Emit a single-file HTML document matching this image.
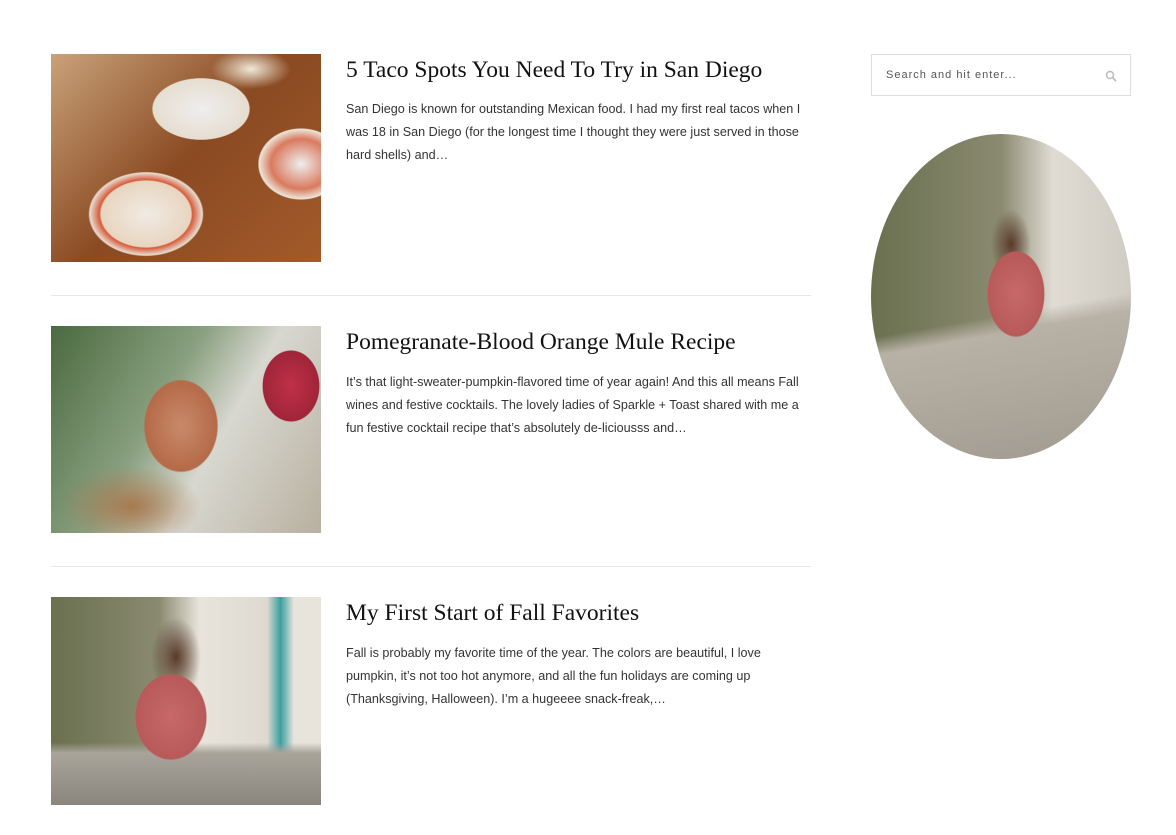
<!DOCTYPE html>
<html><head><meta charset="utf-8"><style>
*{margin:0;padding:0;box-sizing:border-box}
body{width:1176px;height:835px;background:#fff;position:relative;overflow:hidden;font-family:"Liberation Sans",sans-serif}
.img{position:absolute;left:51px;width:270px;overflow:hidden}
h2{position:absolute;left:346px;font-family:"Liberation Serif",serif;font-weight:normal;font-size:23.5px;color:#111;white-space:nowrap;letter-spacing:0px}
p{position:absolute;left:346px;width:462px;font-size:12.6px;line-height:23px;color:#333}
.hr{position:absolute;left:51px;width:760px;height:1px;background:#e8e8e8}
</style></head><body>
<div class="img" style="top:54px;height:208px;background:radial-gradient(ellipse 60px 38px at 150px 55px,#eee 0,#e6ddd0 80%,transparent 82%),radial-gradient(ellipse 75px 55px at 95px 160px,#f0ebe3 0,#e8d5c0 60%,#d85a3a 62%,#e6ddd0 75%,transparent 77%),radial-gradient(ellipse 60px 50px at 250px 110px,#eee 0,#d97a5e 50%,#ece5da 70%,transparent 72%),radial-gradient(ellipse 40px 20px at 200px 15px,#efe8d8 0,transparent 100%),linear-gradient(135deg,#c9a27a,#8a4a22 50%,#a35a2a)"></div>
<h2 style="top:57px">5 Taco Spots You Need To Try in San Diego</h2>
<p style="top:98px">San Diego is known for outstanding Mexican food. I had my first real tacos when I was 18 in San Diego (for the longest time I thought they were just served in those hard shells) and…</p>
<div class="hr" style="top:295px"></div>
<div class="img" style="top:326px;height:207px;background:radial-gradient(ellipse 60px 75px at 130px 100px,#c88a6a 0,#b56a48 60%,transparent 62%),radial-gradient(ellipse 40px 50px at 240px 60px,#c03048 0,#a02538 70%,transparent 72%),radial-gradient(ellipse 70px 40px at 80px 180px,#a87a50 0,transparent 100%),linear-gradient(120deg,#4a6a40,#8aa080 40%,#d8d8d0 60%,#b8b0a0)"></div>
<h2 style="top:329px">Pomegranate-Blood Orange Mule Recipe</h2>
<p style="top:371px">It’s that light-sweater-pumpkin-flavored time of year again! And this all means Fall wines and festive cocktails. The lovely ladies of Sparkle + Toast shared with me a fun festive cocktail recipe that’s absolutely de-liciousss and…</p>
<div class="hr" style="top:566px"></div>
<div class="img" style="top:597px;height:208px;background:radial-gradient(ellipse 50px 60px at 120px 120px,#c86868 0,#b85a5a 70%,transparent 72%),radial-gradient(ellipse 25px 40px at 125px 60px,#5a3a2a 0,transparent 100%),linear-gradient(180deg,transparent 70%,#a8a49a 75%,#8a867e),linear-gradient(90deg,#6a7050,#8a8a70 40%,#e8e4dc 55%,#dedad2 80%,#3aa0a0 85%,#e8e4dc 90%)"></div>
<h2 style="top:600px">My First Start of Fall Favorites</h2>
<p style="top:642px">Fall is probably my favorite time of the year. The colors are beautiful, I love pumpkin, it’s not too hot anymore, and all the fun holidays are coming up (Thanksgiving, Halloween). I’m a hugeeee snack-freak,…</p>
<div style="position:absolute;left:871px;top:54px;width:260px;height:42px;border:1px solid #ddd"></div>
<div style="position:absolute;left:886px;top:69px;font-size:11px;letter-spacing:1px;color:#555">Search and hit enter...</div>
<svg style="position:absolute;left:1105px;top:70px" width="12" height="12" viewBox="0 0 12 12"><circle cx="5" cy="5" r="3.5" fill="none" stroke="#bbb" stroke-width="1.5"/><path d="M7.5 7.5L11 11" stroke="#bbb" stroke-width="1.8"/></svg>
<div style="position:absolute;left:871px;top:134px;width:260px;height:325px;border-radius:50%;overflow:hidden;background:radial-gradient(ellipse 40px 60px at 145px 160px,#c86868 0,#b85a5a 70%,transparent 72%),radial-gradient(ellipse 20px 35px at 140px 110px,#5a3a2a 0,transparent 100%),linear-gradient(170deg,transparent 55%,#b8b2a6 60%,#a09a90),linear-gradient(90deg,#6a7050,#8a8a70 50%,#e0dcd4 70%,#d0ccc4)"></div>
</body></html>
